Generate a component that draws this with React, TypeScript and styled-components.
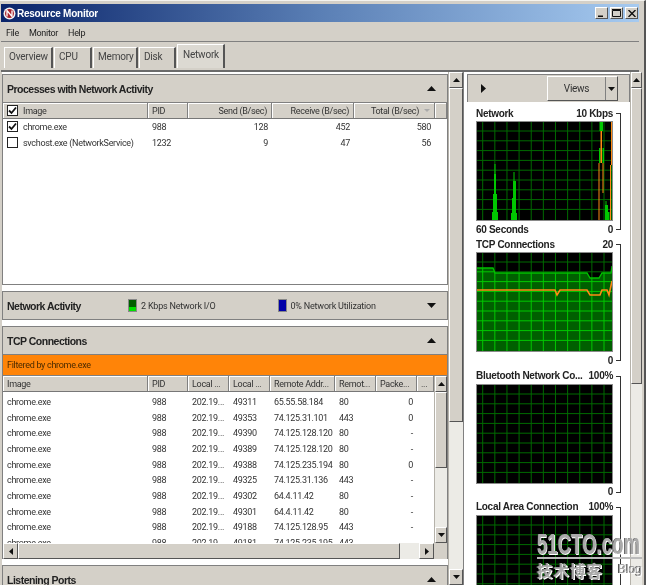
import React from 'react'
import styled, { createGlobalStyle } from 'styled-components'

const GlobalStyle = createGlobalStyle`
  html, body {
    margin: 0;
    padding: 0;
    background: #d4d0c8;
    overflow: hidden;
  }
  * {
    box-sizing: border-box;
  }
`

const Page = styled.div`
  position: relative;
  width: 646px;
  height: 585px;
  overflow: hidden;
  display: flex;
  flex-direction: column;
  padding: 3px 5px 0 1px;
  background: #d4d0c8;
  border-top: 1px solid #f4f3ef;
  border-right: 2px solid #555;
  font-family: Roboto, 'Liberation Sans', sans-serif;
  font-size: 9px;
  letter-spacing: -0.3px;
  color: #222;
  filter: blur(0.3px);
`

const TitleBar = styled.div`
  height: 18px;
  flex: none;
  display: flex;
  align-items: center;
  gap: 1px;
  padding: 0 1px 0 2px;
  background: linear-gradient(90deg, #0a246a 0%, #5a7fb5 50%, #a6caf0 100%);
`

const TitleText = styled.span`
  flex: 1;
  color: #fff;
  font-family: 'Liberation Sans', sans-serif;
  font-weight: 700;
  font-size: 10px;
  letter-spacing: -0.25px;
`

const WinButton = styled.span`
  width: 13px;
  height: 12px;
  margin-left: 1px;
  display: flex;
  align-items: center;
  justify-content: center;
  background: #d4d0c8;
  border: 1px solid;
  border-color: #fff #555 #555 #fff;
`

const MenuBar = styled.div`
  height: 20px;
  flex: none;
  display: flex;
  align-items: center;
  gap: 10px;
  padding: 2px 0 0 5px;
  border-bottom: 1px solid #808080;
`

const TabStrip = styled.div`
  height: 30px;
  flex: none;
  display: flex;
  align-items: flex-end;
  padding: 0 0 2px 3px;
  border-bottom: 2px solid #6b6b6b;
`

const Tab = styled.div<{ $width: number; $active?: boolean }>`
  width: ${(p) => p.$width}px;
  height: ${(p) => (p.$active ? 24 : 21)}px;
  margin-right: 1px;
  padding: ${(p) => (p.$active ? '4px 0 0 5px' : '3px 0 0 4px')};
  font-size: 10px;
  letter-spacing: -0.2px;
  background: ${(p) => (p.$active ? '#dcd9d2' : '#d4d0c8')};
  border-top: 1px solid #fff;
  border-left: 1px solid #fff;
  border-right: 2px solid #555;
  color: #444;
`

const Main = styled.div`
  flex: 1;
  min-height: 0;
  display: grid;
  grid-template-columns: 446px 15px 4px 163px 12px;
  background: #fff;
  margin-left: 1px;
`

const LeftColumn = styled.div`
  display: flex;
  flex-direction: column;
  gap: 6px;
  padding-top: 2px;
  overflow: hidden;
  background: #fff;
`

const Panel = styled.section`
  flex: none;
  border: 1px solid #808080;
  border-bottom: none;
  display: flex;
  flex-direction: column;
  background: #fff;
`

const PanelHeader = styled.div`
  height: 28px;
  flex: none;
  display: flex;
  align-items: center;
  padding: 0 11px 0 4px;
  background: #d4d0c8;
  border-bottom: 1px solid #808080;
`

const PanelTitle = styled.h3`
  margin: 0;
  flex: 1;
  min-width: 0;
  white-space: nowrap;
  font-family: 'Liberation Sans', sans-serif;
  font-size: 10.5px;
  font-weight: 700;
  color: #222;
  letter-spacing: -0.5px;
`

const LegendActivity = styled.div`
  flex: none;
  width: 299px;
  display: flex;
`

const Legend = styled.div`
  width: 150px;
  display: flex;
  align-items: center;
  gap: 4px;
  letter-spacing: -0.2px;
  color: #333;
`

const Swatch = styled.span<{ $color: string; $low?: string }>`
  width: 9px;
  height: 13px;
  border: 1px solid #888;
  background: linear-gradient(
    180deg,
    ${(p) => p.$color} 65%,
    ${(p) => p.$low ?? p.$color} 65%
  );
`

const FilterBar = styled.div`
  height: 21px;
  display: flex;
  align-items: center;
  padding-left: 4px;
  background: #ff8408;
  border-bottom: 1px solid #808080;
  color: #4a2a00;
`

const HeaderRow = styled.div<{ $cols: string }>`
  height: 16px;
  flex: none;
  display: grid;
  grid-template-columns: ${(p) => p.$cols};
  background: #d4d0c8;
  border-bottom: 1px solid #777;
`

const HeaderCell = styled.div<{ $align?: string }>`
  display: flex;
  align-items: center;
  gap: 5px;
  justify-content: ${(p) => (p.$align === 'right' ? 'flex-end' : 'flex-start')};
  padding: 0 4px;
  border-right: 1px solid #808080;
  box-shadow: inset 1px 1px 0 #fff;
  overflow: hidden;
  white-space: nowrap;
  color: #333;
`

const Row = styled.div<{ $cols: string }>`
  height: 15.7px;
  flex: none;
  display: grid;
  grid-template-columns: ${(p) => p.$cols};
  align-items: center;
  background: #fff;
`

const Cell = styled.div<{ $align?: string }>`
  padding: 0 4px;
  text-align: ${(p) => p.$align ?? 'left'};
  white-space: nowrap;
  overflow: hidden;
  color: #333;
`

const CheckCell = styled.div`
  display: flex;
  align-items: center;
  gap: 5px;
  padding-left: 4px;
  white-space: nowrap;
  color: #333;
`

const Check = styled.span`
  width: 11px;
  height: 11px;
  flex: none;
  display: flex;
  border: 1px solid #222;
  background: #fff;
`

const ProcessBody = styled.div`
  height: 166px;
  border-bottom: 1px solid #808080;
`

const TcpBody = styled.div`
  display: grid;
  grid-template-columns: 1fr 13px;
  grid-template-rows: 167px 16px;
`

const TcpTable = styled.div`
  overflow: hidden;
`

const TcpList = styled.div`
  padding-top: 2px;
`

const VScroll = styled.div`
  display: flex;
  flex-direction: column;
  height: 100%;
  background: #ecebe6;
  border-left: 1px solid #b5b2aa;
`

const ScrollButton = styled.div`
  height: 16px;
  flex: none;
  display: flex;
  align-items: center;
  justify-content: center;
  background: #d4d0c8;
  border: 1px solid;
  border-color: #fff #555 #555 #fff;
`

const ScrollThumb = styled.div<{ $height: number }>`
  height: ${(p) => p.$height}px;
  flex: none;
  background: #d4d0c8;
  border: 1px solid;
  border-color: #fff #555 #555 #fff;
`

const Spacer = styled.div`
  flex: 1;
`

const HScroll = styled.div`
  height: 16px;
  display: flex;
  background: #ecebe6;
`

const HButton = styled(ScrollButton)`
  width: 15px;
`

const HThumb = styled.div`
  width: 382px;
  background: #d4d0c8;
  border: 1px solid;
  border-color: #fff #555 #555 #fff;
`

const Corner = styled.div`
  background: #d4d0c8;
`

const Gutter = styled.div`
  background: #fff;
  border-left: 1px solid #808080;
`

const RightColumn = styled.div`
  display: flex;
  flex-direction: column;
  padding-top: 2px;
  overflow: hidden;
  background: #fff;
`

const Toolbar = styled.div`
  height: 28px;
  flex: none;
  display: flex;
  align-items: center;
  justify-content: space-between;
  padding: 0 11px 0 13px;
  background: #d4d0c8;
  border: 1px solid #808080;
  border-bottom: none;
`

const ViewsButton = styled.div`
  width: 71px;
  height: 25px;
  display: grid;
  grid-template-columns: 1fr 11px;
  border: 1px solid;
  border-color: #fff #555 #555 #fff;
  color: #333;
`

const ViewsLabel = styled.span`
  display: flex;
  align-items: center;
  justify-content: center;
  border-right: 1px solid #808080;
  font-size: 10px;
`

const ViewsArrow = styled.span`
  display: flex;
  align-items: center;
  justify-content: center;
`

const Graphs = styled.div`
  padding: 4px 0 0 9px;
  display: flex;
  flex-direction: column;
  gap: 0.3px;
`

const Graph = styled.div`
  display: flex;
  flex-direction: column;
  position: relative;
  width: 146px;
`

const GraphHead = styled.div`
  display: flex;
  justify-content: space-between;
  width: 137px;
  height: 15px;
  padding-bottom: 1px;
  align-items: center;
  font-family: 'Liberation Sans', sans-serif;
  font-size: 10px;
  font-weight: 700;
  color: #222;
  white-space: nowrap;
  letter-spacing: -0.3px;
`

const GraphFoot = styled(GraphHead)`
  height: 16px;
  padding-bottom: 0;
`

const Bracket = styled.span`
  position: absolute;
  top: 7px;
  right: 1px;
  bottom: 7px;
  width: 5px;
  border: 1px solid #333;
  border-left: none;
`

const ChartFrame = styled.svg`
  display: block;
  width: 137px;
  height: 100px;
  flex: none;
  background: #000;
  border: 1px solid #8a8a8a;
`

const Watermark = styled.div`
  position: absolute;
  left: 537px;
  top: 528px;
  width: 105px;
  display: flex;
  flex-direction: column;
  color: #a9a9a9;
  font-family: 'Liberation Sans', sans-serif;
  font-weight: 700;
  letter-spacing: 0;
  text-shadow: 1px 1px 0 #fff, -1px 0 0 #555;
`

const WatermarkRule = styled.div`
  height: 30px;
  border-bottom: 2px solid #bbb;
`

const WatermarkLogo = styled.div`
  font-size: 30px;
  line-height: 29px;
  white-space: nowrap;
  transform: scaleX(0.62);
  transform-origin: left center;
`

const WatermarkLine = styled.div`
  display: flex;
  justify-content: space-between;
  align-items: center;
  line-height: 20px;
`

const WatermarkCn = styled.span`
  font-family: 'Noto Sans CJK SC', sans-serif;
  font-size: 15.5px;
  letter-spacing: 1px;
`

const WatermarkBlog = styled.span`
  font-size: 12px;
  font-weight: 400;
  padding-bottom: 2px;
`

const UpArrow = () => (
  <svg width="9" height="5" viewBox="0 0 9 5">
    <path d="M4.5 0 9 5H0z" fill="#111" />
  </svg>
)

const DownArrow = () => (
  <svg width="9" height="5" viewBox="0 0 9 5">
    <path d="M0 0h9L4.500 5z" fill="#111" />
  </svg>
)

const SmallUp = () => (
  <svg width="7" height="4" viewBox="0 0 7 4">
    <path d="M3.500 0 7 4H0z" fill="#111" />
  </svg>
)

const SmallDown = () => (
  <svg width="7" height="4" viewBox="0 0 7 4">
    <path d="M0 0h7L3.500 4z" fill="#111" />
  </svg>
)

const Tick = () => (
  <svg width="9" height="9" viewBox="0 0 9 9">
    <path d="M1 4.500 3.500 7 8 1.500" fill="none" stroke="#111" strokeWidth="1.800" />
  </svg>
)

const verticals = Array.from({ length: 11 }, (_, i) => 5.7 + i * 12.13)
const horizontals = Array.from({ length: 9 }, (_, i) => 9 + i * 9.8)

function GridLines({ color }: { color: string }) {
  return (
    <g stroke={color} strokeWidth="1">
      {verticals.map((x) => (
        <line key={x} x1={x} x2={x} y1={0} y2={100} />
      ))}
      {horizontals.map((y) => (
        <line key={y} x1={0} x2={137} y1={y} y2={y} />
      ))}
    </g>
  )
}

function Chart({ children }: { children?: React.ReactNode }) {
  return (
    <ChartFrame viewBox="0 0 135 98" preserveAspectRatio="none">
      <GridLines color="#006a00" />
      {children}
    </ChartFrame>
  )
}

const tcpGreen = '0,15 16,15 18,20 110,20 113,25 122,25 125,20 134,20 135,13'
const tcpOrange =
  '0,37 78,37 80,42 83,37 110,37 113,42 123,42 125,37 130,37 132,42 135,28'

// x, y, width, height of each bar in the network graph
const networkGreen = [
  [17.500, 42, 1, 10],
  [17, 52, 2, 20],
  [16, 72, 4, 18],
  [15, 90, 6, 8],
  [36.500, 50, 1, 9],
  [36, 59, 3, 17],
  [35, 76, 4, 15],
  [34, 91, 6, 7],
  [122.500, 0, 3.500, 9],
  [122, 26, 1.500, 15],
  [125.500, 26, 1.500, 15],
  [128.500, 79, 1, 19],
  [128, 83, 3, 15],
  [130, 90, 2.500, 8],
  [134.500, 43, 1, 55],
]

const networkOrange = [
  [123.500, 9, 1.500, 32],
  [121.500, 41, 1, 57],
  [125.500, 41, 1, 30],
  [134, 0, 1.200, 43],
  [133, 43, 1, 55],
]

function NetworkSeries() {
  return (
    <>
      {networkGreen.map(([x, y, w, h]) => (
        <rect key={`g${x}-${y}`} x={x} y={y} width={w} height={h} fill="#00c800" />
      ))}
      {networkOrange.map(([x, y, w, h]) => (
        <rect key={`o${x}-${y}`} x={x} y={y} width={w} height={h} fill="#ff8a14" />
      ))}
    </>
  )
}

function TcpSeries() {
  return (
    <>
      <clipPath id="tcp-fill">
        <polygon points={`${tcpGreen} 135,100 0,100`} />
      </clipPath>
      <polygon points={`${tcpGreen} 135,100 0,100`} fill="#005f00" />
      <g clipPath="url(#tcp-fill)">
        <GridLines color="#00c800" />
      </g>
      <polyline points={tcpGreen} fill="none" stroke="#00c000" strokeWidth="1.300" />
      <polyline points={tcpOrange} fill="none" stroke="#ff8a14" strokeWidth="1.600" />
    </>
  )
}

const processCols = '145px 40px 84px 82px 81px 1fr'
const tcpCols = '145px 40px 41px 41px 65px 41px 41px 17px'

const tcpRows = [
  ['49311', '65.55.58.184', '80', '0'],
  ['49353', '74.125.31.101', '443', '0'],
  ['49390', '74.125.128.120', '80', '-'],
  ['49389', '74.125.128.120', '80', '-'],
  ['49388', '74.125.235.194', '80', '0'],
  ['49325', '74.125.31.136', '443', '-'],
  ['49302', '64.4.11.42', '80', '-'],
  ['49301', '64.4.11.42', '80', '-'],
  ['49188', '74.125.128.95', '443', '-'],
  ['49181', '74.125.235.195', '443', '-'],
]

const processes = [
  { name: 'chrome.exe', pid: '988', send: '128', receive: '452', total: '580', checked: true },
  { name: 'svchost.exe (NetworkService)', pid: '1232', send: '9', receive: '47', total: '56', checked: false },
]

export default function App() {
  return (
    <Page>
      <GlobalStyle />
      <TitleBar>
        <svg width="13" height="13" viewBox="0 0 13 13">
          <circle cx="6.500" cy="6.500" r="6" fill="#f4f4f4" />
          <circle cx="6.500" cy="6.500" r="4.500" fill="#a8242c" />
          <path d="M4 9.500V3.500l5 6V3.500" stroke="#fff" strokeWidth="1.300" fill="none" />
        </svg>
        <TitleText>Resource Monitor</TitleText>
        <WinButton>
          <svg width="7" height="7" viewBox="0 0 7 7">
            <path d="M0 5.500h5v1.500H0z" fill="#111" />
          </svg>
        </WinButton>
        <WinButton>
          <svg width="9" height="8" viewBox="0 0 9 8">
            <path d="M.5 1.500h8v6h-8z" fill="none" stroke="#111" />
            <path d="M0 .5h9" stroke="#111" />
          </svg>
        </WinButton>
        <WinButton>
          <svg width="8" height="7" viewBox="0 0 8 7">
            <path d="M.5 0 7.500 7M7.500 0 .5 7" stroke="#111" strokeWidth="1.400" />
          </svg>
        </WinButton>
      </TitleBar>
      <MenuBar>
        <span>File</span>
        <span>Monitor</span>
        <span>Help</span>
      </MenuBar>
      <TabStrip>
        <Tab $width={49}>Overview</Tab>
        <Tab $width={38}>CPU</Tab>
        <Tab $width={45}>Memory</Tab>
        <Tab $width={37}>Disk</Tab>
        <Tab $width={48} $active>
          Network
        </Tab>
      </TabStrip>
      <Main>
        <LeftColumn>
          <Panel>
            <PanelHeader>
              <PanelTitle>Processes with Network Activity</PanelTitle>
              <UpArrow />
            </PanelHeader>
            <HeaderRow $cols={processCols}>
              <HeaderCell>
                <Check>
                  <Tick />
                </Check>
                Image
              </HeaderCell>
              <HeaderCell>PID</HeaderCell>
              <HeaderCell $align="right">Send (B/sec)</HeaderCell>
              <HeaderCell $align="right">Receive (B/sec)</HeaderCell>
              <HeaderCell $align="right">
                Total (B/sec)
                <svg width="6" height="3" viewBox="0 0 6 3">
                  <path d="M0 0h6L3 3z" fill="#aaa" />
                </svg>
              </HeaderCell>
              <HeaderCell />
            </HeaderRow>
            <ProcessBody>
              {processes.map((p) => (
                <Row key={p.name} $cols={processCols}>
                  <CheckCell>
                    <Check>{p.checked && <Tick />}</Check>
                    {p.name}
                  </CheckCell>
                  <Cell>{p.pid}</Cell>
                  <Cell $align="right">{p.send}</Cell>
                  <Cell $align="right">{p.receive}</Cell>
                  <Cell $align="right">{p.total}</Cell>
                </Row>
              ))}
            </ProcessBody>
          </Panel>
          <Panel>
            <PanelHeader>
              <PanelTitle>Network Activity</PanelTitle>
              <LegendActivity>
                <Legend>
                  <Swatch $color="#005f00" $low="#00e000" />2 Kbps Network I/O
                </Legend>
                <Legend>
                  <Swatch $color="#0000a8" />
                  0% Network Utilization
                </Legend>
              </LegendActivity>
              <DownArrow />
            </PanelHeader>
          </Panel>
          <Panel>
            <PanelHeader>
              <PanelTitle>TCP Connections</PanelTitle>
              <UpArrow />
            </PanelHeader>
            <FilterBar>Filtered by chrome.exe</FilterBar>
            <TcpBody>
              <TcpTable>
                <HeaderRow $cols={tcpCols}>
                  <HeaderCell>Image</HeaderCell>
                  <HeaderCell>PID</HeaderCell>
                  <HeaderCell>Local ...</HeaderCell>
                  <HeaderCell>Local ...</HeaderCell>
                  <HeaderCell>Remote Addr...</HeaderCell>
                  <HeaderCell>Remot...</HeaderCell>
                  <HeaderCell>Packe...</HeaderCell>
                  <HeaderCell>...</HeaderCell>
                </HeaderRow>
                <TcpList>
                  {tcpRows.map(([port, addr, remote, packets]) => (
                    <Row key={port} $cols={tcpCols}>
                      <Cell>chrome.exe</Cell>
                      <Cell>988</Cell>
                      <Cell>202.19...</Cell>
                      <Cell>{port}</Cell>
                      <Cell>{addr}</Cell>
                      <Cell>{remote}</Cell>
                      <Cell $align="right">{packets}</Cell>
                    </Row>
                  ))}
                </TcpList>
              </TcpTable>
              <VScroll>
                <ScrollButton>
                  <SmallUp />
                </ScrollButton>
                <ScrollThumb $height={76} />
                <Spacer />
                <ScrollButton>
                  <SmallDown />
                </ScrollButton>
              </VScroll>
              <HScroll>
                <HButton>
                  <svg width="4" height="7" viewBox="0 0 4 7">
                    <path d="M4 0v7L0 3.500z" fill="#111" />
                  </svg>
                </HButton>
                <HThumb />
                <Spacer />
                <HButton>
                  <svg width="4" height="7" viewBox="0 0 4 7">
                    <path d="M0 0v7l4-3.500z" fill="#111" />
                  </svg>
                </HButton>
              </HScroll>
              <Corner />
            </TcpBody>
          </Panel>
          <Panel>
            <PanelHeader>
              <PanelTitle>Listening Ports</PanelTitle>
              <UpArrow />
            </PanelHeader>
          </Panel>
        </LeftColumn>
        <VScroll>
          <ScrollButton>
            <SmallUp />
          </ScrollButton>
          <ScrollThumb $height={334} />
          <Spacer />
          <ScrollButton>
            <SmallDown />
          </ScrollButton>
        </VScroll>
        <Gutter />
        <RightColumn>
          <Toolbar>
            <svg width="5" height="9" viewBox="0 0 5 9">
              <path d="M0 0v9l5-4.500z" fill="#111" />
            </svg>
            <ViewsButton>
              <ViewsLabel>Views</ViewsLabel>
              <ViewsArrow>
                <SmallDown />
              </ViewsArrow>
            </ViewsButton>
          </Toolbar>
          <Graphs>
            <Graph>
              <GraphHead>
                <span>Network</span>
                <span>10 Kbps</span>
              </GraphHead>
              <Chart>
                <NetworkSeries />
              </Chart>
              <GraphFoot>
                <span>60 Seconds</span>
                <span>0</span>
              </GraphFoot>
              <Bracket />
            </Graph>
            <Graph>
              <GraphHead>
                <span>TCP Connections</span>
                <span>20</span>
              </GraphHead>
              <Chart>
                <TcpSeries />
              </Chart>
              <GraphFoot>
                <span />
                <span>0</span>
              </GraphFoot>
              <Bracket />
            </Graph>
            <Graph>
              <GraphHead>
                <span>Bluetooth Network Co...</span>
                <span>100%</span>
              </GraphHead>
              <Chart />
              <GraphFoot>
                <span />
                <span>0</span>
              </GraphFoot>
              <Bracket />
            </Graph>
            <Graph>
              <GraphHead>
                <span>Local Area Connection</span>
                <span>100%</span>
              </GraphHead>
              <Chart />
              <Bracket />
            </Graph>
          </Graphs>
        </RightColumn>
        <VScroll>
          <ScrollButton>
            <SmallUp />
          </ScrollButton>
          <ScrollThumb $height={296} />
          <Spacer />
        </VScroll>
      </Main>
      <Watermark>
        <WatermarkRule>
          <WatermarkLogo>51CTO.com</WatermarkLogo>
        </WatermarkRule>
        <WatermarkLine>
          <WatermarkCn>技术博客</WatermarkCn>
          <WatermarkBlog>Blog</WatermarkBlog>
        </WatermarkLine>
      </Watermark>
    </Page>
  )
}
